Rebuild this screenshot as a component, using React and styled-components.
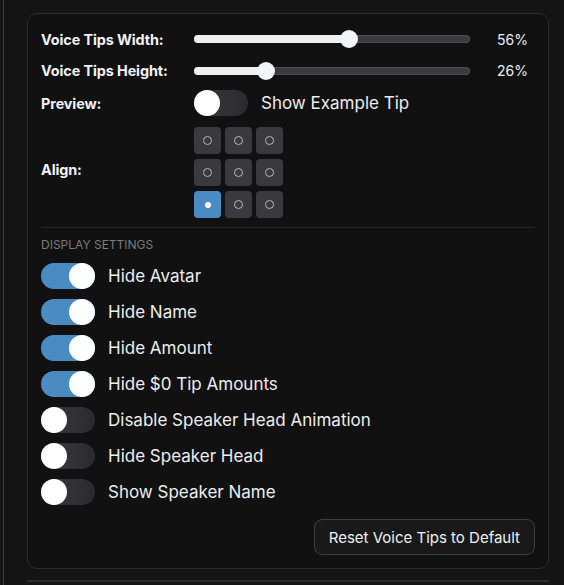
import { Fragment } from "react";
import styled, { createGlobalStyle } from "styled-components";

const GlobalStyle = createGlobalStyle`
  html, body {
    margin: 0;
    padding: 0;
    background: #141415;
  }
  body {
    font-family: Inter, "Noto Sans", sans-serif;
    color: #ececec;
  }
`;

const sliders = [
  { label: "Voice Tips Width:", value: 56 },
  { label: "Voice Tips Height:", value: 26 },
];

const displayOptions = [
  { label: "Hide Avatar", on: true },
  { label: "Hide Name", on: true },
  { label: "Hide Amount", on: true },
  { label: "Hide $0 Tip Amounts", on: true },
  { label: "Disable Speaker Head Animation", on: false },
  { label: "Hide Speaker Head", on: false },
  { label: "Show Speaker Name", on: false },
];

function Slider({ value }) {
  return (
    <Track>
      <Fill style={{ width: `${value}%` }} />
      <Thumb style={{ left: `${value}%` }} />
    </Track>
  );
}

function App() {
  return (
    <Page>
      <GlobalStyle />
      <Panel>
        <SettingsGrid>
          {sliders.map((s) => (
            <Fragment key={s.label}>
              <Label>{s.label}</Label>
              <Slider value={s.value} />
              <Value>{s.value}%</Value>
            </Fragment>
          ))}
          <Label>Preview:</Label>
          <ControlRow>
            <Toggle />
            <ToggleText>Show Example Tip</ToggleText>
          </ControlRow>
          <Label>Align:</Label>
          <ControlRow>
            <AlignGrid>
              {Array.from({ length: 9 }).map((_, i) => (
                <AlignCell key={i} $active={i === 6}>
                  <Dot $active={i === 6} />
                </AlignCell>
              ))}
            </AlignGrid>
          </ControlRow>
        </SettingsGrid>

        <Divider />
        <SectionTitle>Display Settings</SectionTitle>

        <OptionList>
          {displayOptions.map((o) => (
            <OptionRow key={o.label}>
              <Toggle $on={o.on} />
              <ToggleText>{o.label}</ToggleText>
            </OptionRow>
          ))}
        </OptionList>

        <Footer>
          <ResetButton>Reset Voice Tips to Default</ResetButton>
        </Footer>
      </Panel>
      <NextPanel />
    </Page>
  );
}

const Page = styled.div`
  height: 585px;
  box-sizing: border-box;
  margin-left: 3px;
  padding: 13px 15px 0 23px;
  border-left: 1px solid #2b4256;
  overflow: hidden;
`;

const Panel = styled.div`
  width: 522px;
  box-sizing: border-box;
  border: 1px solid #2c2c2e;
  border-radius: 10px;
  background: #111112;
  padding: 13px 13px 13px 13px;
`;

const SettingsGrid = styled.div`
  display: grid;
  grid-template-columns: 153px 276px 1fr;
  grid-template-rows: 24px 31px 26px auto;
  row-gap: 4px;
  align-items: center;
`;

const Label = styled.div`
  grid-column: 1;
  font-size: 14.4px;
  font-weight: 700;
  color: #f2f2f2;
  letter-spacing: -0.1px;
`;

const Value = styled.div`
  font-size: 14px;
  text-align: right;
  padding-right: 7px;
  color: #eee;
`;

const Track = styled.div`
  position: relative;
  height: 8px;
  border-radius: 4px;
  background: #3b3b3d;
  box-shadow: inset 0 0 0 1px #4a4a4c;
`;

const Fill = styled.div`
  height: 100%;
  border-radius: 4px;
  background: #f1f1f1;
`;

const Thumb = styled.div`
  position: absolute;
  top: 50%;
  width: 18px;
  height: 18px;
  border-radius: 50%;
  background: #f4f5f7;
  transform: translate(-50%, -50%);
`;

const ControlRow = styled.div`
  display: flex;
  align-items: center;
  gap: 13px;
  grid-column: 2 / 4;
`;

const Toggle = styled.div`
  position: relative;
  width: 54px;
  height: 26px;
  flex: none;
  border-radius: 13px;
  background: ${({ $on }) =>
    $on ? "#4a8bc3" : "linear-gradient(90deg, #3a3a3c, #2b2b2d)"};

  &::after {
    content: "";
    position: absolute;
    top: 0;
    left: ${({ $on }) => ($on ? "28px" : "0")};
    width: 26px;
    height: 26px;
    border-radius: 50%;
    background: #ffffff;
  }
`;

const ToggleText = styled.span`
  font-size: 17px;
  color: #ededed;
`;

const AlignGrid = styled.div`
  display: grid;
  grid-template-columns: repeat(3, 27px);
  grid-auto-rows: 27px;
  gap: 5px 4px;
  padding-top: 7px;
`;

const AlignCell = styled.div`
  display: flex;
  align-items: center;
  justify-content: center;
  border-radius: 4px;
  background: ${({ $active }) => ($active ? "#4a8bc3" : "#3a3a3c")};
`;

const Dot = styled.span`
  box-sizing: border-box;
  width: ${({ $active }) => ($active ? "6px" : "9px")};
  height: ${({ $active }) => ($active ? "6px" : "9px")};
  border-radius: 50%;
  border: ${({ $active }) => ($active ? "none" : "1px solid #b8b8b8")};
  background: ${({ $active }) => ($active ? "#ffffff" : "transparent")};
`;

const Divider = styled.hr`
  border: none;
  border-top: 1px solid #262628;
  margin: 9px 0 0;
`;

const SectionTitle = styled.div`
  margin-top: 9px;
  font-size: 12px;
  text-transform: uppercase;
  color: #7a7a7c;
`;

const OptionList = styled.div`
  display: flex;
  flex-direction: column;
  gap: 10px;
  margin-top: 11px;
`;

const OptionRow = styled.div`
  display: flex;
  align-items: center;
  gap: 13px;
`;

const Footer = styled.div`
  display: flex;
  justify-content: flex-end;
  margin-top: 14px;
`;

const ResetButton = styled.button`
  font-family: Inter, "Noto Sans", sans-serif;
  font-size: 15px;
  color: #f0f0f0;
  background: #19191a;
  border: 1px solid #3e3e40;
  border-radius: 8px;
  height: 36px;
  padding: 0 14px;
`;

const NextPanel = styled.div`
  width: 522px;
  margin-top: 11px;
  border-top: 2px solid #2a2a2c;
`;

export default App;
